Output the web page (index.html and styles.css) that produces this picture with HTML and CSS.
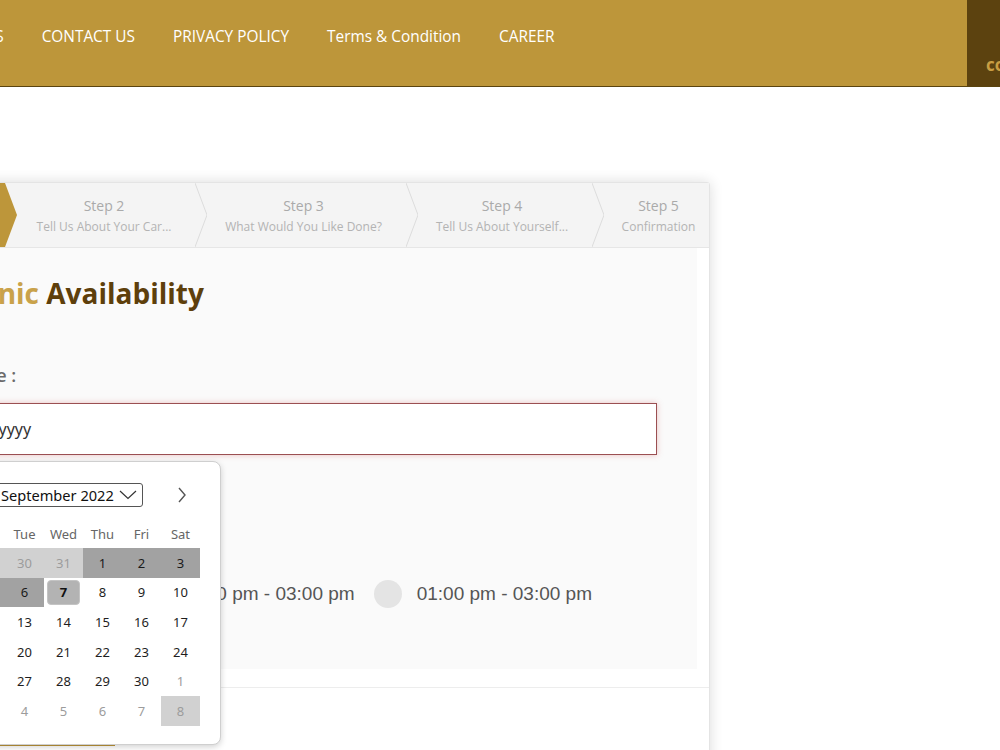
FILE: index.html
```html
<!DOCTYPE html>
<html lang="en">
<head>
<meta charset="utf-8">
<title>Book a Mechanic</title>
<link rel="stylesheet" href="styles.css">
</head>
<body>
<header class="topbar">
  <nav class="menu">
    <a class="menu-item">SERVICES</a>
    <a class="menu-item">CONTACT US</a>
    <a class="menu-item">PRIVACY POLICY</a>
    <a class="menu-item">Terms &amp; Condition</a>
    <a class="menu-item">CAREER</a>
  </nav>
  <div class="cta">contact</div>
</header>

<main class="page">
  <section class="card">
    <div class="steps">
      <div class="step step-active step-w1">
        <span class="step-title">Step 1</span>
        <span class="step-sub">Mechanic Availability</span>
        <svg class="chev" viewBox="0 0 12 64" preserveAspectRatio="none"><polygon points="0,0 12,32 0,64" fill="#bd963a"/></svg>
      </div>
      <div class="step step-w2">
        <span class="step-title">Step 2</span>
        <span class="step-sub">Tell Us About Your Car...</span>
        <svg class="chev" viewBox="0 0 12 64" preserveAspectRatio="none"><polygon points="0,0 12,32 0,64" fill="#f4f4f4"/><polyline points="0,0 12,32 0,64" fill="none" stroke="#dcdcdc" stroke-width="1"/></svg>
      </div>
      <div class="step step-w3">
        <span class="step-title">Step 3</span>
        <span class="step-sub">What Would You Like Done?</span>
        <svg class="chev" viewBox="0 0 12 64" preserveAspectRatio="none"><polygon points="0,0 12,32 0,64" fill="#f4f4f4"/><polyline points="0,0 12,32 0,64" fill="none" stroke="#dcdcdc" stroke-width="1"/></svg>
      </div>
      <div class="step step-w4">
        <span class="step-title">Step 4</span>
        <span class="step-sub">Tell Us About Yourself...</span>
        <svg class="chev" viewBox="0 0 12 64" preserveAspectRatio="none"><polygon points="0,0 12,32 0,64" fill="#f4f4f4"/><polyline points="0,0 12,32 0,64" fill="none" stroke="#dcdcdc" stroke-width="1"/></svg>
      </div>
      <div class="step step-w5">
        <span class="step-title">Step 5</span>
        <span class="step-sub">Confirmation</span>
      </div>
    </div>

    <div class="panel">
      <h2 class="heading"><span class="heading-light">Mechanic</span> Availability</h2>

      <label class="label">Select Date :</label>
      <div class="field">
        <div class="date-input">mm/dd/yyyy</div>

        <div class="picker">
          <div class="picker-head">
            <span class="nav-arrow">
              <svg width="10" height="16" viewBox="0 0 10 16"><polyline points="8,1 2,8 8,15" fill="none" stroke="#555" stroke-width="1.4"/></svg>
            </span>
            <span class="month-select">September 2022
              <svg class="caret" width="18" height="10" viewBox="0 0 18 10"><polyline points="1,1 9,8.5 17,1" fill="none" stroke="#333" stroke-width="1.2"/></svg>
            </span>
            <span class="spacer"></span>
            <span class="nav-arrow">
              <svg width="10" height="16" viewBox="0 0 10 16"><polyline points="2,1 8,8 2,15" fill="none" stroke="#555" stroke-width="1.4"/></svg>
            </span>
          </div>
          <div class="grid">
            <span class="dow">Sun</span><span class="dow">Mon</span><span class="dow">Tue</span><span class="dow">Wed</span><span class="dow">Thu</span><span class="dow">Fri</span><span class="dow">Sat</span>

            <span class="day off past">28</span><span class="day off past">29</span><span class="day off past">30</span><span class="day off past">31</span><span class="day range">1</span><span class="day range">2</span><span class="day range">3</span>

            <span class="day range">4</span><span class="day range">5</span><span class="day range">6</span><span class="day today"><b>7</b></span><span class="day">8</span><span class="day">9</span><span class="day">10</span>

            <span class="day">11</span><span class="day">12</span><span class="day">13</span><span class="day">14</span><span class="day">15</span><span class="day">16</span><span class="day">17</span>

            <span class="day">18</span><span class="day">19</span><span class="day">20</span><span class="day">21</span><span class="day">22</span><span class="day">23</span><span class="day">24</span>

            <span class="day">25</span><span class="day">26</span><span class="day">27</span><span class="day">28</span><span class="day">29</span><span class="day">30</span><span class="day off">1</span>

            <span class="day off">2</span><span class="day off">3</span><span class="day off">4</span><span class="day off">5</span><span class="day off">6</span><span class="day off">7</span><span class="day off past">8</span>
          </div>
        </div>
      </div>

      <label class="label label-time">Select Time Slot :</label>
      <div class="slots">
        <div class="slot"><span class="radio"></span><span class="slot-text">10:00 am - 12:00 pm</span></div>
        <div class="slot"><span class="radio"></span><span class="slot-text">12:00 pm - 03:00 pm</span></div>
        <div class="slot"><span class="radio"></span><span class="slot-text">01:00 pm - 03:00 pm</span></div>
      </div>
    </div>

    <div class="footer">
      <div class="btn-line"></div>
    </div>
  </section>
</main>
</body>
</html>
```

FILE: styles.css
```css
* { box-sizing: border-box; }

html, body {
  margin: 0;
  padding: 0;
  overflow: hidden;
  height: 750px;
  background: #ffffff;
  font-family: "Open Sans", "Noto Sans", sans-serif;
}

/* ---------- top bar ---------- */
.topbar {
  display: flex;
  align-items: stretch;
  height: 87px;
  background: #bd963a;
  border-bottom: 1px solid #5a4410;
}

.menu {
  display: flex;
  align-items: flex-start;
  margin-left: -82px;
  padding-top: 26px;
}

.menu-item {
  padding: 0 19px;
  color: #ffffff;
  font-size: 15.4px;
  line-height: 22px;
  white-space: nowrap;
}

.cta {
  margin-left: auto;
  width: 33px;
  background: #5c420f;
  color: #c99e42;
  font-weight: 700;
  font-size: 17px;
  padding: 53px 0 0 19px;
  overflow: hidden;
  white-space: nowrap;
}

/* ---------- card ---------- */
.page {
  padding-top: 95px;
}

.card {
  position: relative;
  margin-left: -110px;
  width: 820px;
  background: #ffffff;
  border: 1px solid #e4e4e4;
  border-radius: 3px;
  box-shadow: 0 0 14px rgba(0, 0, 0, 0.14);
}

.steps {
  display: flex;
  height: 65px;
  background: #f4f4f4;
  border-bottom: 1px solid #e6e6e6;
}

.step {
  position: relative;
  display: flex;
  flex-direction: column;
  align-items: center;
  justify-content: center;
  padding-left: 12px;
  padding-top: 2px;
  color: #aaaaaa;
  white-space: nowrap;
  overflow: visible;
}

.step-w1 { width: 114px; padding-left: 0; padding-right: 44px; }
.step-w2 { width: 190px; padding-right: 4px; }
.step-w3 { width: 211px; padding-right: 6px; }
.step-w4 { width: 186px; padding-right: 6px; }
.step-w5 { flex: 1; padding-left: 16px; }

.step-active {
  background: #bd963a;
  color: #ffffff;
}

.step-title {
  font-size: 14px;
  line-height: 21px;
}

.step-sub {
  font-size: 12px;
  line-height: 21px;
  color: #b3b3b3;
}

.step-active .step-sub { color: #ffffff; }

.chev {
  position: absolute;
  top: 0;
  right: -12px;
  width: 12px;
  height: 64px;
  z-index: 1;
}

/* ---------- panel ---------- */
.panel {
  margin-right: 12px;
  background: #fafafa;
  padding: 26px 42px 61px 18px;
}

.heading {
  margin: 0 0 0 -4px;
  font-size: 28px;
  line-height: 38px;
  font-weight: 700;
  color: #5e3f0b;
}

.heading-light { color: #c9a24a; }

.label {
  display: block;
  margin-top: 51px;
  font-size: 18px;
  line-height: 24px;
  font-weight: 600;
  color: #6a6a6a;
}

.field {
  position: relative;
  margin-top: 16px;
}

.date-input {
  height: 52px;
  margin-right: -2px;
  border: 1px solid #9b4f52;
  background: #ffffff;
  box-shadow: 0 0 6px rgba(205, 90, 90, 0.35);
  padding-left: 27px;
  font-family: "Noto Sans", "Open Sans", sans-serif;
  font-size: 16px;
  line-height: 50px;
  color: #333333;
}

.label-time {
  margin-top: 59px;
}

/* ---------- date picker ---------- */
.picker {
  position: absolute;
  top: 58px;
  left: -1px;
  width: 313px;
  height: 284px;
  background: #ffffff;
  border: 1px solid #cfcfcf;
  border-radius: 8px;
  box-shadow: 0 2px 6px rgba(0, 0, 0, 0.18);
  padding: 20px 19px 0 19px;
  z-index: 5;
  font-family: "Noto Sans", "Open Sans", sans-serif;
}

.picker-head {
  display: flex;
  align-items: center;
  height: 24px;
  margin-top: 1px;
}

.nav-arrow {
  display: flex;
  align-items: center;
  justify-content: center;
  width: 39px;
  height: 24px;
}

.month-select {
  display: flex;
  align-items: center;
  gap: 5px;
  margin-left: 28px;
  height: 24px;
  padding: 0 5px 0 5px;
  border: 1px solid #555555;
  border-radius: 3px;
  font-size: 14.6px;
  color: #111111;
  white-space: nowrap;
}

.caret { display: block; }

.spacer { flex: 1; }

.grid {
  display: grid;
  grid-template-columns: repeat(7, 39px);
  grid-auto-rows: 29.6px;
  grid-template-rows: 28px;
  margin-top: 13px;
  margin-left: -1px;
}

.dow {
  display: flex;
  align-items: center;
  justify-content: center;
  font-size: 13px;
  color: #666666;
}

.day {
  display: flex;
  align-items: center;
  justify-content: center;
  font-size: 13px;
  color: #1e1e1e;
}

.day.off { color: #9c9c9c; }
.day.past { background: #d1d1d1; }
.day.range { background: #a2a2a2; color: #1a1a1a; }

.day.today {
  margin: 2px 3px;
  border-radius: 4px;
  background: #b3b3b3;
  border: 1px solid #c4c4c4;
  color: #111111;
}

/* ---------- time slots ---------- */
.slots {
  display: flex;
  align-items: center;
  gap: 19px;
  margin-top: 42px;
  margin-left: -10px;
}

.slot {
  display: flex;
  align-items: center;
  gap: 15px;
}

.radio {
  width: 28px;
  height: 28px;
  border-radius: 50%;
  background: #e4e4e4;
}

.slot-text {
  font-family: "Liberation Sans", Arial, sans-serif;
  font-size: 19px;
  color: #555555;
  white-space: nowrap;
}

/* ---------- footer ---------- */
.footer {
  margin-top: 18px;
  border-top: 1px solid #ededed;
  padding: 57px 0 20px 18px;
}

.btn-line {
  width: 206px;
  height: 40px;
  border-top: 1px solid #bd963a;
}
```
